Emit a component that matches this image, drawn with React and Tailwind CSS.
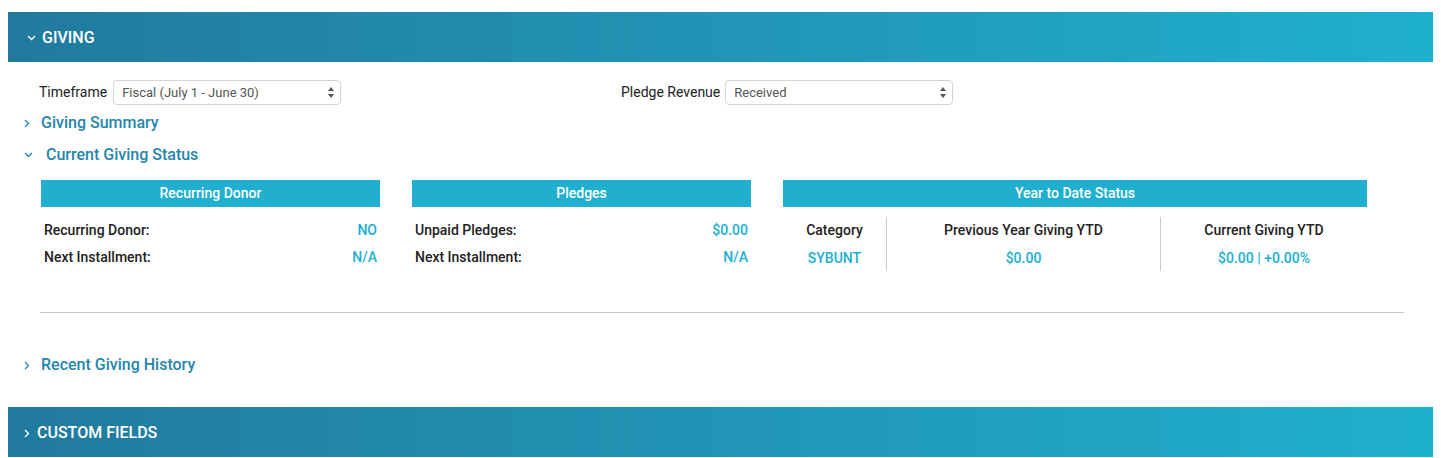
import React from "react";

const ChevDown = ({ className = "" }) => (
  <svg width="9" height="6" viewBox="0 0 9 6" className={className}>
    <polyline points="1,1 4.5,4.5 8,1" fill="none" stroke="currentColor" strokeWidth="1.3" />
  </svg>
);
const ChevRight = ({ className = "" }) => (
  <svg width="6" height="9" viewBox="0 0 6 9" className={className}>
    <polyline points="1,1 4.5,4.5 1,8" fill="none" stroke="currentColor" strokeWidth="1.3" />
  </svg>
);

const Select = ({ value }) => (
  <div className="relative w-[228px] h-[25px] border border-[#d4d4d4] rounded-[4px] bg-white flex items-center pl-[8px] text-[13px] text-[#555]">
    {value}
    <svg width="6" height="11" viewBox="0 0 6 11" className="absolute right-[6px] top-[6px]">
      <polygon points="0,4 3,0 6,4" fill="#555" />
      <polygon points="0,7 3,11 6,7" fill="#555" />
    </svg>
  </div>
);

const BoxHead = ({ children, className = "" }) => (
  <div className={`h-[27px] bg-[#20afcf] text-white text-[14px] font-medium flex items-center justify-center ${className}`}>
    {children}
  </div>
);

export default function App() {
  return (
    <div className="px-2 pt-3 bg-white text-[#222]" style={{ fontFamily: "Roboto, 'Liberation Sans', sans-serif" }}>
      <div className="h-[50px] bg-gradient-to-r from-[#217a9d] to-[#1fb0cf] flex items-center pl-[19px] pt-[2px] text-white">
        <ChevDown className="mr-[6px]" />
        <span className="text-[16px] font-medium">GIVING</span>
      </div>

      <div className="pt-[18px]">
        <div className="flex items-center pl-[31px]">
          <div className="flex items-center w-[582px]">
            <span className="text-[14px] text-[#222] mr-[6px]">Timeframe</span>
            <Select value="Fiscal (July 1 - June 30)" />
          </div>
          <div className="flex items-center">
            <span className="text-[14px] text-[#222] mr-[5px]">Pledge Revenue</span>
            <Select value="Received" />
          </div>
        </div>

        <div className="flex items-center h-[20px] mt-[8px] pl-[16px] text-[#2586ab]">
          <ChevRight className="mr-[11px]" />
          <span className="text-[16px] font-medium">Giving Summary</span>
        </div>
        <div className="flex items-center h-[20px] mt-[12px] pl-[16px] text-[#2586ab]">
          <ChevDown className="mr-[13px]" />
          <span className="text-[16px] font-medium">Current Giving Status</span>
        </div>

        <div className="flex gap-[32px] pl-[33px] mt-[15px]">
          <div className="w-[339px]">
            <BoxHead>Recurring Donor</BoxHead>
            <div className="px-[3px] pt-[13px] text-[14px] font-medium">
              <div className="flex justify-between h-[27px] items-start">
                <span>Recurring Donor:</span>
                <span className="text-[#20afcf]">NO</span>
              </div>
              <div className="flex justify-between h-[27px] items-start">
                <span>Next Installment:</span>
                <span className="text-[#20afcf]">N/A</span>
              </div>
            </div>
          </div>
          <div className="w-[339px]">
            <BoxHead>Pledges</BoxHead>
            <div className="px-[3px] pt-[13px] text-[14px] font-medium">
              <div className="flex justify-between h-[27px] items-start">
                <span>Unpaid Pledges:</span>
                <span className="text-[#20afcf]">$0.00</span>
              </div>
              <div className="flex justify-between h-[27px] items-start">
                <span>Next Installment:</span>
                <span className="text-[#20afcf]">N/A</span>
              </div>
            </div>
          </div>
          <div className="w-[584px]">
            <BoxHead>Year to Date Status</BoxHead>
            <div className="flex mt-[10px] h-[54px] text-[14px] font-medium">
              <div className="w-[104px] flex flex-col items-center pt-[3px] gap-[7px] border-r border-[#ccc]">
                <span>Category</span>
                <span className="text-[#20afcf]">SYBUNT</span>
              </div>
              <div className="w-[274px] flex flex-col items-center pt-[3px] gap-[7px] border-r border-[#ccc]">
                <span>Previous Year Giving YTD</span>
                <span className="text-[#20afcf]">$0.00</span>
              </div>
              <div className="flex-1 flex flex-col items-center pt-[3px] gap-[7px]">
                <span>Current Giving YTD</span>
                <span className="text-[#20afcf]">$0.00 | +0.00%</span>
              </div>
            </div>
          </div>
        </div>

        <div className="ml-[32px] w-[1364px] h-px bg-[#c8c8c8] mt-[38px]" />

        <div className="flex items-center h-[20px] mt-[42px] pl-[16px] text-[#2586ab]">
          <ChevRight className="mr-[11px]" />
          <span className="text-[16px] font-medium">Recent Giving History</span>
        </div>
      </div>

      <div className="mt-[32px] h-[50px] bg-gradient-to-r from-[#217a9d] to-[#1fb0cf] flex items-center pl-[16px] pt-[2px] text-white">
        <ChevRight className="mr-[7px]" />
        <span className="text-[16px] font-medium">CUSTOM FIELDS</span>
      </div>
    </div>
  );
}
